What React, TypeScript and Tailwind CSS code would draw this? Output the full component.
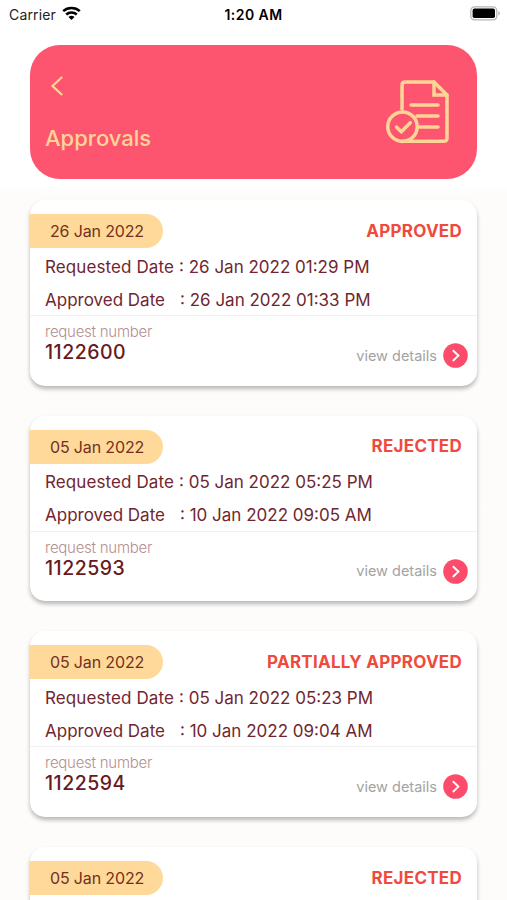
interface RequestRecord {
  date: string;
  status: string;
  id: string;
  requested?: string;
  approved?: string;
}

const records: RequestRecord[] = [
  { date: '26 Jan 2022', status: 'APPROVED', requested: '26 Jan 2022 01:29 PM', approved: '26 Jan 2022 01:33 PM', id: '1122600' },
  { date: '05 Jan 2022', status: 'REJECTED', requested: '05 Jan 2022 05:25 PM', approved: '10 Jan 2022 09:05 AM', id: '1122593' },
  { date: '05 Jan 2022', status: 'PARTIALLY APPROVED', requested: '05 Jan 2022 05:23 PM', approved: '10 Jan 2022 09:04 AM', id: '1122594' },
  { date: '05 Jan 2022', status: 'REJECTED', id: '' },
];

function StatusBar() {
  return (
    <div className="grid h-[28px] shrink-0 grid-cols-3 items-center pl-[9px] pr-[6px] text-[14px] text-black">
      <div className="flex items-center gap-[6px]">
        <span className="tracking-[0.15px] text-[#222]">Carrier</span>
        <svg className="-mt-[2px]" width="19" height="14" viewBox="0 0 19 14" fill="none" stroke="#000" strokeWidth="2.6">
          <path d="M1.2 5.1C5.9.9 13.1.9 17.8 5.1" />
          <path d="M4.2 8.5c3-2.7 7.6-2.7 10.6 0" />
          <path d="M6.5 11.1c1.8-1.7 4.2-1.7 6 0L9.5 14Z" fill="#000" stroke="none" />
        </svg>
      </div>
      <span className="-ml-[3px] text-center font-semibold tracking-[0.45px]">1:20 AM</span>
      <svg className="-mt-[2px] justify-self-end" width="31" height="15" viewBox="0 0 31 15">
        <rect x="0.8" y="0.8" width="26" height="13" rx="3.8" fill="#fff" stroke="#b5b5b5" strokeWidth="1.3" />
        <rect x="2.6" y="2.6" width="22.4" height="9.4" rx="1.8" fill="#000" />
        <path d="M28.4 5v4.6c2-.7 2-3.9 0-4.6Z" fill="#b5b5b5" />
      </svg>
    </div>
  );
}

function DocumentIcon() {
  return (
    <svg width="64" height="64" viewBox="0 0 64 64" fill="none" stroke="#ffd596" strokeWidth="3.5" strokeLinecap="round" strokeLinejoin="round">
      <path d="M16 29V5.2c0-2 1.3-3.3 3.3-3.3H48l13 13v43c0 2-1.3 3.3-3.3 3.3H16.5" />
      <path d="M48 2v13h13" strokeLinejoin="miter" />
      <path d="M25 25h27M31 36h21M33.5 47H52" />
      <circle cx="16.5" cy="46.7" r="14.7" />
      <path d="m10.5 47 4.8 4.8 9-9" />
    </svg>
  );
}

function Header() {
  return (
    <header className="mx-[30px] mt-[17px] flex h-[134px] shrink-0 justify-between rounded-[30px] bg-[#fd5570]">
      <div className="flex flex-col pl-[15px] pt-[31px]">
        <svg className="ml-[5px]" width="14" height="20" viewBox="0 0 14 20" fill="none" stroke="#ffd596" strokeWidth="2.3">
          <path d="M12.2 1 2.5 10l9.7 9" />
        </svg>
        <h1 className="mt-[27px] text-[22px] font-medium leading-[30px] text-[#ffd596]">Approvals</h1>
      </div>
      <div className="pr-[27px] pt-[35px]">
        <DocumentIcon />
      </div>
    </header>
  );
}

function ApprovalCard({ record }: { record: RequestRecord }) {
  return (
    <article className="flex h-[185.6px] shrink-0 flex-col rounded-[15px] bg-white pt-[14px] shadow-[0_3px_4px_rgba(0,0,0,0.27)]">
      <div className="flex h-[34px] items-center justify-between pr-[15px]">
        <span className="flex h-full w-[133px] items-center rounded-r-full bg-[#ffd999] pl-[20px] text-[16px] tracking-[-0.15px] text-[#75301c]">{record.date}</span>
        <span className="mt-px text-[17px] font-bold tracking-[0.27px] text-[#f04a3c]">{record.status}</span>
      </div>
      {record.requested && (
        <>
          <div className="flex h-[68px] flex-col border-b border-[#f1f1f2] pl-[15px] text-[17px] leading-[33px] text-[#702631]">
            <div className="mt-[2.8px] flex"><span className="w-[134px] tracking-[0.1px]">Requested Date</span><span>: {record.requested}</span></div>
            <div className="flex"><span className="w-[135px]">Approved Date</span><span>: {record.approved}</span></div>
          </div>
          <div className="flex justify-between pl-[15px] pr-[9px]">
            <div className="flex flex-col pt-[6px]">
              <span className="text-[15px] font-light leading-[20px] tracking-[-0.26px] text-[#b58f92]">request number</span>
              <span className="text-[19.5px] font-medium leading-[21px] tracking-[0.5px] text-[#681a22]">{record.id}</span>
            </div>
            <div className="mt-[27px] flex h-[25px] items-center gap-[6px]">
              <span className="text-[14.5px] text-[#a3a3a3]">view details</span>
              <svg width="25" height="25" viewBox="0 0 25 25" fill="none">
                <circle cx="12.5" cy="12.5" r="12.3" fill="#fd4c6b" />
                <path d="m9.8 7.2 5.6 5.4-5.6 5.4" stroke="#fff" strokeWidth="1.9" />
              </svg>
            </div>
          </div>
        </>
      )}
    </article>
  );
}

export default function App() {
  return (
    <div className="flex h-[900px] w-[507px] flex-col overflow-hidden bg-white font-['Inter',sans-serif]">
      <StatusBar />
      <Header />
      <main className="mt-[5px] flex min-h-0 flex-1 flex-col gap-[30px] overflow-hidden bg-linear-to-b from-white to-[#fdfcfa] to-[12px] px-[30px] pt-[16px]">
        {records.map((record, index) => (
          <ApprovalCard key={index} record={record} />
        ))}
      </main>
    </div>
  );
}
